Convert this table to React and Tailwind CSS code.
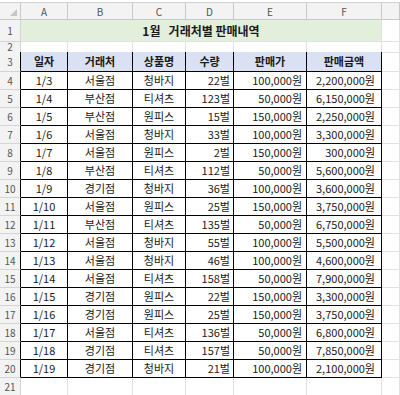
const cols = ["A", "B", "C", "D", "E", "F", ""];

const rows = [
  ["1/3", "서울점", "청바지", "22벌", "100,000원", "2,200,000원"],
  ["1/4", "부산점", "티셔츠", "123벌", "50,000원", "6,150,000원"],
  ["1/5", "부산점", "원피스", "15벌", "150,000원", "2,250,000원"],
  ["1/6", "서울점", "청바지", "33벌", "100,000원", "3,300,000원"],
  ["1/7", "서울점", "원피스", "2벌", "150,000원", "300,000원"],
  ["1/8", "부산점", "티셔츠", "112벌", "50,000원", "5,600,000원"],
  ["1/9", "경기점", "청바지", "36벌", "100,000원", "3,600,000원"],
  ["1/10", "서울점", "원피스", "25벌", "150,000원", "3,750,000원"],
  ["1/11", "부산점", "티셔츠", "135벌", "50,000원", "6,750,000원"],
  ["1/12", "서울점", "청바지", "55벌", "100,000원", "5,500,000원"],
  ["1/13", "서울점", "청바지", "46벌", "100,000원", "4,600,000원"],
  ["1/14", "서울점", "티셔츠", "158벌", "50,000원", "7,900,000원"],
  ["1/15", "경기점", "원피스", "22벌", "150,000원", "3,300,000원"],
  ["1/16", "경기점", "원피스", "25벌", "150,000원", "3,750,000원"],
  ["1/17", "서울점", "티셔츠", "136벌", "50,000원", "6,800,000원"],
  ["1/18", "경기점", "티셔츠", "157벌", "50,000원", "7,850,000원"],
  ["1/19", "경기점", "청바지", "21벌", "100,000원", "2,100,000원"],
];

const headers = ["일자", "거래처", "상품명", "수량", "판매가", "판매금액"];

const gridCols = "grid grid-cols-[21px_47px_65px_53px_48px_73px_75px_1fr]";
const align = ["justify-center", "justify-center", "justify-center", "justify-end pr-[3px]", "justify-end pr-[4px]", "justify-end pr-[6px]"];

const RowHead = ({ n, className = "" }) => (
  <div className={`flex items-center justify-center leading-none border-r border-b border-[#d4d4d4] bg-[#f3f3f3] text-[10px] text-[#555] ${className}`}>
    {n}
  </div>
);

const Blank = ({ className = "" }) => (
  <div className={`border-r border-b border-[#e1e1e1] ${className}`} />
);

const App = () => {
  return (
    <div
      className="w-[400px] h-[395px] overflow-hidden bg-white text-[#1a1a1a]"
      style={{ fontFamily: '"Noto Sans CJK KR", "Noto Sans", sans-serif' }}
    >
      <div className="h-[3px] border-b border-[#d0d0d0] bg-white" />

      {/* column letters */}
      <div className={`${gridCols} h-[17px]`}>
        <div className="relative border-r border-b border-[#c8c8c8] bg-[#f3f3f3]">
          <div className="absolute right-[3px] bottom-[3px] w-0 h-0 border-l-[7px] border-l-transparent border-b-[7px] border-b-[#c6c6c6]" />
        </div>
        {cols.map((c, i) => (
          <div key={i} className="flex items-center justify-center border-r border-b border-[#c8c8c8] bg-[#f3f3f3] text-[10px] text-[#555]">
            {c}
          </div>
        ))}
      </div>

      {/* row 1: title */}
      <div className={`${gridCols} h-[22px]`}>
        <RowHead n={1} />
        <div className="col-span-6 flex items-center justify-center border-r border-b border-[#e1e1e1] bg-[#e2efda] text-[12px] font-bold whitespace-pre">
          {"1월   거래처별 판매내역"}
        </div>
        <Blank />
      </div>

      {/* row 2 */}
      <div className={`${gridCols} h-[10px]`}>
        <RowHead n={2} className="text-[9px]" />
        {cols.map((c, i) => (
          <Blank key={i} className={i < 6 ? "border-b-black" : ""} />
        ))}
      </div>

      {/* row 3: headers */}
      <div className={`${gridCols} h-[20px]`}>
        <RowHead n={3} className="border-r-black" />
        {headers.map((h, i) => (
          <div key={i} className="flex items-center justify-center border-r border-b border-black bg-[#d9e1f2] text-[11px] font-bold">
            {h}
          </div>
        ))}
        <Blank />
      </div>

      {rows.map((r, ri) => (
        <div key={ri} className={`${gridCols} h-[18px]`}>
          <RowHead n={ri + 4} className="border-r-black" />
          {r.map((v, i) => (
            <div key={i} className={`flex items-center ${align[i]} border-r border-b border-black text-[11px] whitespace-nowrap`}>
              {v}
            </div>
          ))}
          <Blank />
        </div>
      ))}

      <div className={`${gridCols} h-[18px]`}>
        <RowHead n={21} />
        {cols.map((c, i) => (
          <Blank key={i} />
        ))}
      </div>
    </div>
  );
};

export default App;
